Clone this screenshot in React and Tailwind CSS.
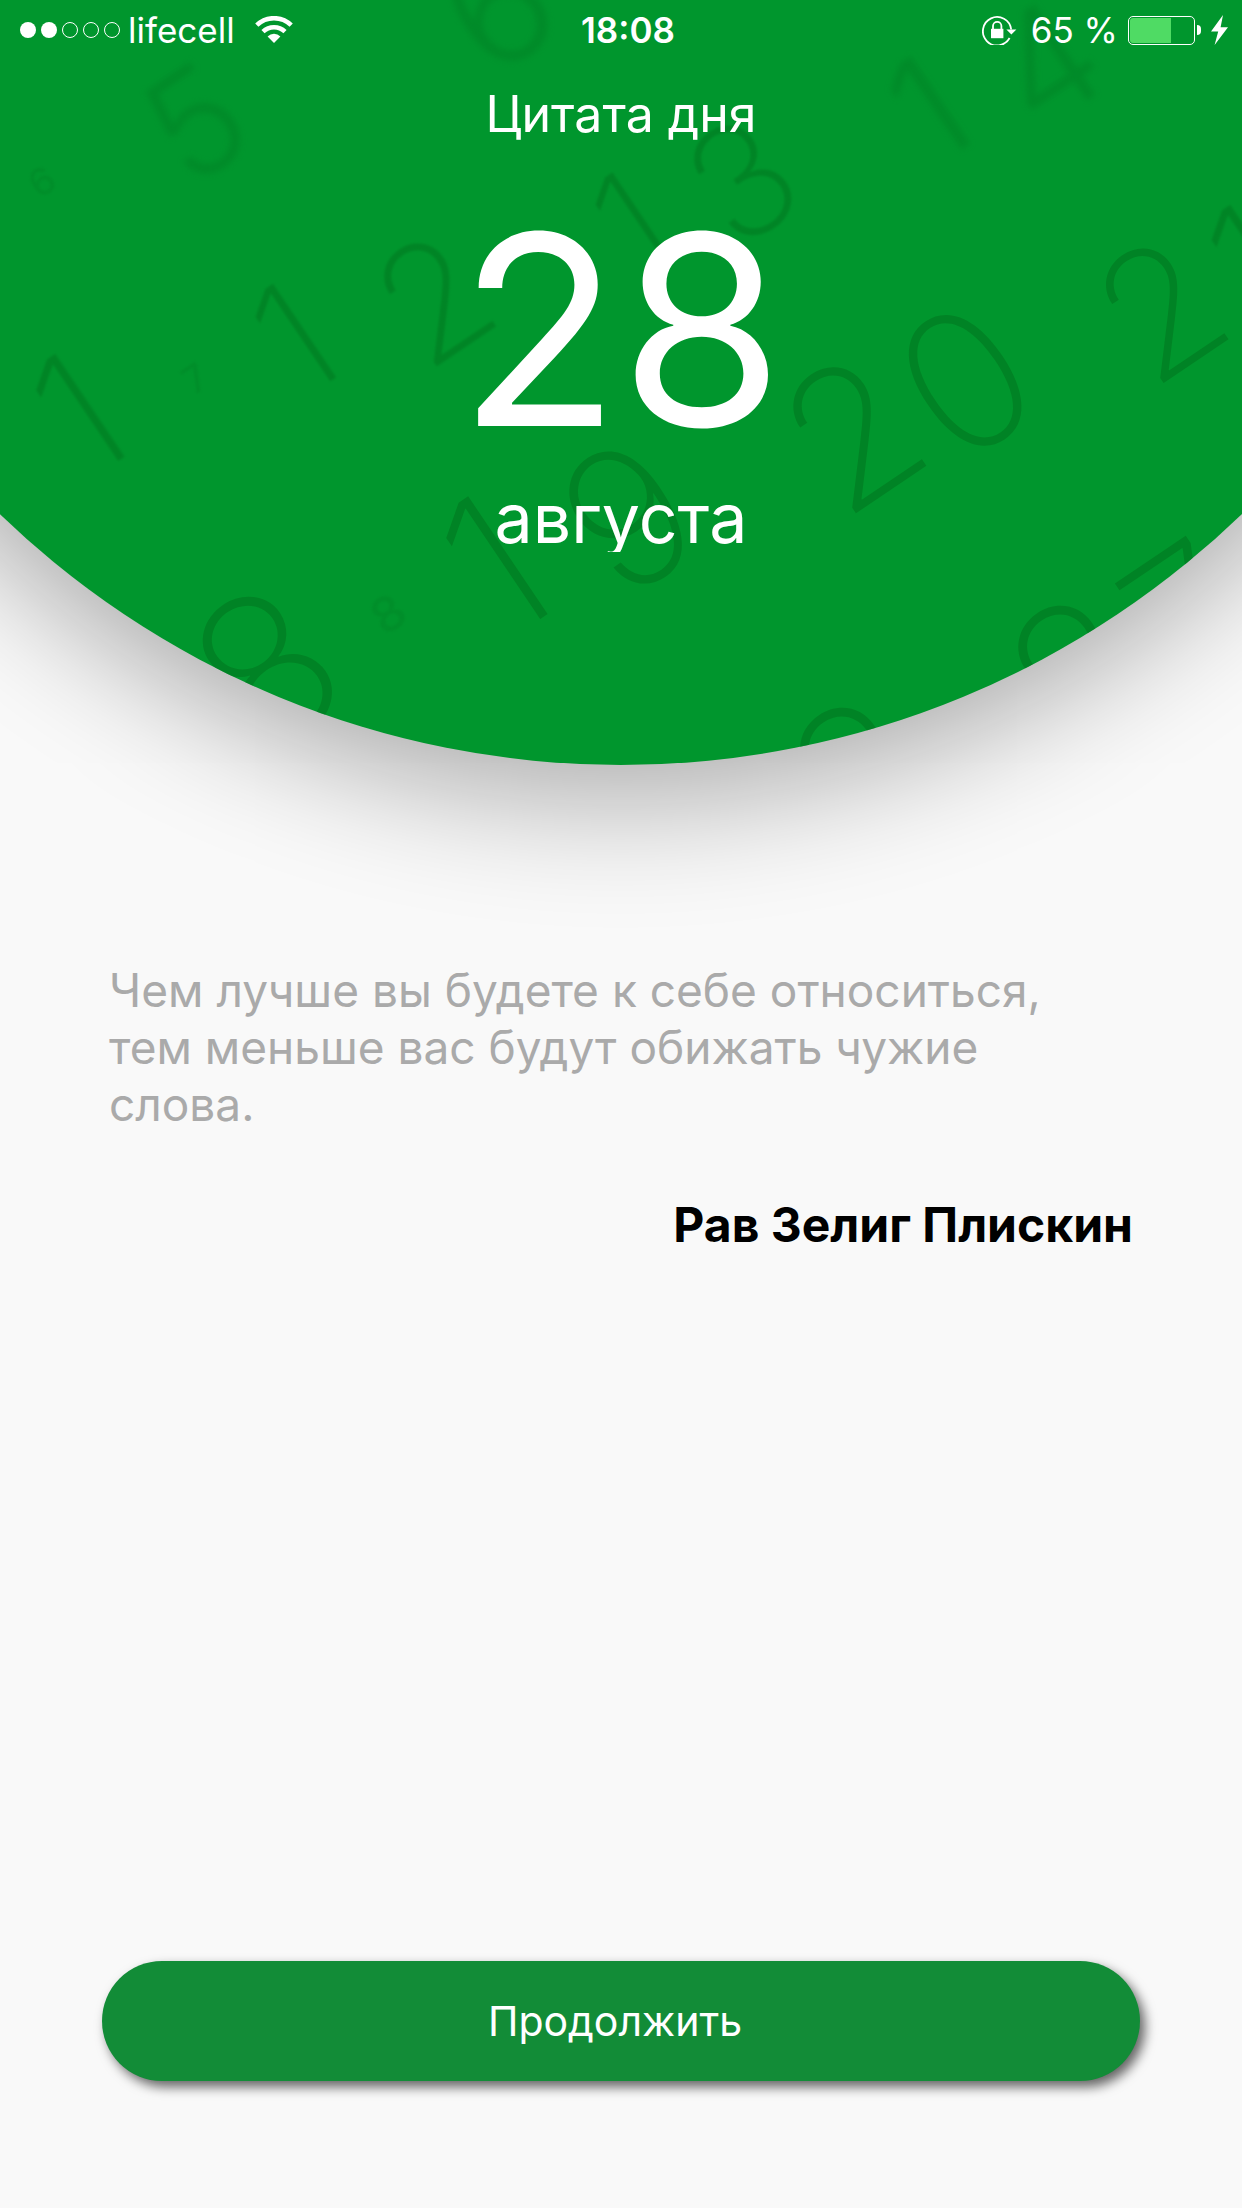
const numerals = [
  { char: "5", x: 195, y: 122, size: 145, look: "faint" },
  { char: "6", x: 497, y: 5, size: 160, look: "faint" },
  { char: "1", x: 928, y: 108, size: 145, look: "faint" },
  { char: "4", x: 1045, y: 62, size: 150, look: "faint" },
  { char: "1", x: 632, y: 224, size: 150, look: "soft" },
  { char: "3", x: 742, y: 180, size: 155, look: "soft" },
  { char: "1", x: 294, y: 338, size: 155, look: "soft" },
  { char: "2", x: 434, y: 298, size: 160, look: "soft" },
  { char: "1", x: 78, y: 413, size: 170, look: "soft" },
  { char: "2", x: 1160, y: 308, size: 175, look: "sharp" },
  { char: "1", x: 1252, y: 262, size: 165, look: "soft" },
  { char: "2", x: 852, y: 432, size: 190, look: "sharp" },
  { char: "0", x: 965, y: 380, size: 190, look: "sharp" },
  { char: "1", x: 494, y: 564, size: 195, look: "sharp" },
  { char: "9", x: 628, y: 516, size: 190, look: "sharp" },
  { char: "8", x: 266, y: 668, size: 205, look: "sharp" },
  { char: "2", x: 1080, y: 674, size: 200, look: "sharp" },
  { char: "7", x: 1190, y: 618, size: 195, look: "sharp" },
  { char: "2", x: 862, y: 776, size: 200, look: "sharp" },
  { char: "7", x: 195, y: 378, size: 38, look: "small" },
  { char: "8", x: 388, y: 613, size: 50, look: "small" },
  { char: "6", x: 42, y: 181, size: 38, look: "small" },
];

const looks = {
  faint: "fill-[#00761f]/35 blur-[3px] font-light",
  soft: "fill-[#00761f]/55 blur-[1px] font-extralight",
  sharp: "fill-[#00761f]/60 font-extralight",
  small: "fill-[#00761f]/25 blur-[1px] font-medium",
};

function CalendarBackdrop() {
  return (
    <svg viewBox="-273 -1023 1788 1788" className="h-full w-full" aria-hidden="true">
      {numerals.map((n, i) => (
        <text
          key={i}
          className={looks[n.look]}
          fontSize={n.size}
          textAnchor="middle"
          transform={`translate(${n.x} ${n.y}) rotate(-34)`}
          y={n.size * 0.364}
        >
          {n.char}
        </text>
      ))}
    </svg>
  );
}

function Signal() {
  return (
    <span className="flex gap-[5px]" aria-hidden="true">
      {[true, true, false, false, false].map((on, i) => (
        <span key={i} className={on ? "size-4 rounded-full bg-white" : "size-4 rounded-full border border-white"} />
      ))}
    </span>
  );
}

function Wifi() {
  return (
    <svg viewBox="0 0 38 28" className="h-7 w-[38px]" aria-hidden="true">
      <g fill="none" stroke="white" strokeWidth="4.5">
        <path d="M1.8 9.2A24.5 24.5 0 0 1 36.2 9.2" />
        <path d="M8 15.6A15.8 15.8 0 0 1 30 15.6" />
      </g>
      <path d="M19 27 12.6 20.4A9.2 9.2 0 0 1 25.4 20.4Z" fill="white" />
    </svg>
  );
}

function RotationLock() {
  return (
    <svg viewBox="0 0 35 30" className="h-[30px] w-[35px]" aria-hidden="true">
      <path d="M27.6 23A14.2 14.2 0 1 1 29.2 14.5" fill="none" stroke="white" strokeWidth="1.8" />
      <path d="M24.4 14.4H34.4L29.4 19.6Z" fill="white" />
      <path d="M9 13.8h12.4v9.4H9Z" fill="white" />
      <path d="M11 14.5V11a4.2 4.2 0 0 1 8.4 0v3.5" fill="none" stroke="white" strokeWidth="1.8" />
    </svg>
  );
}

function Battery() {
  return (
    <span className="flex items-center gap-[2px]" aria-hidden="true">
      <span className="flex h-[29px] w-[67px] rounded-[5px] border border-white p-px">
        <span className="w-[65%] rounded-l-[3px] bg-[#4fdb64]" />
      </span>
      <span className="h-[10px] w-1 rounded-r-full bg-white" />
    </span>
  );
}

function Bolt() {
  return (
    <svg viewBox="0 0 17 30" className="h-[30px] w-[17px]" aria-hidden="true">
      <path d="M12 0 0 16.5H7.2L3.6 30 17 12.2H9.6Z" fill="white" />
    </svg>
  );
}

function StatusBar() {
  return (
    <div className="grid h-[60px] grid-cols-[1fr_auto_1fr] items-center pr-[14px] pl-5 text-[35px] leading-[60px]">
      <div className="flex items-center gap-2">
        <Signal />
        <span>lifecell</span>
        <span className="pl-3">
          <Wifi />
        </span>
      </div>
      <span className="pl-2 font-semibold">18:08</span>
      <div className="flex items-center justify-end gap-[10px]">
        <RotationLock />
        <span className="pl-1">65 %</span>
        <Battery />
        <Bolt />
      </div>
    </div>
  );
}

export default function App() {
  return (
    <main className="flex min-h-screen flex-col overflow-hidden bg-[#f9f9f9] font-['Inter','Liberation_Sans',sans-serif]">
      <header className="relative pb-[213px] text-white">
        <div className="absolute bottom-0 left-1/2 aspect-square w-[144%] -translate-x-1/2 overflow-hidden rounded-full bg-[#00962d] shadow-[0_33px_126px_rgba(0,0,0,0.32)]">
          <CalendarBackdrop />
        </div>
        <div className="relative">
          <StatusBar />
          <div className="flex flex-col items-center">
            <h1 className="pt-6 text-[50px] leading-[60px]">Цитата дня</h1>
            <p className="pt-[26px] text-[265px] leading-[320px]">28</p>
            <p className="h-[62px] overflow-hidden text-[68px] leading-[56px]">августа</p>
          </div>
        </div>
      </header>

      <section className="px-[109px] pt-[197px] leading-[57px]">
        <p className="text-[46px] text-[#aaaaaa]">
          Чем лучше вы будете к себе относиться, тем меньше вас будут обижать чужие слова.
        </p>
        <p className="pt-[63px] text-right text-[48px] font-bold text-black">Рав Зелиг Плискин</p>
      </section>

      <div className="mt-auto px-[102px] pb-[127px]">
        <button
          type="button"
          className="h-[120px] w-full rounded-full bg-[#128c37] pt-px pr-3 text-[41px] text-white shadow-[5px_6px_12px_rgba(0,0,0,0.6)]"
        >
          Продолжить
        </button>
      </div>
    </main>
  );
}
